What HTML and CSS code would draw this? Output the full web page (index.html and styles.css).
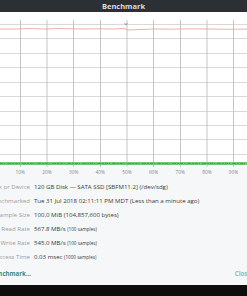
FILE: index.html
```html
<!DOCTYPE html>
<html lang="en">
<head>
  <meta charset="UTF-8" />
  <title>Benchmark</title>
  <link rel="stylesheet" href="styles.css">
</head>
<body>

  <div class="window">
    <header class="titlebar">Benchmark</header>

    <div class="chart">
      <svg class="plot" width="247" height="155" viewBox="0 0 247 155">
        <g class="grid-h">
          <line x1="0" y1="12.5" x2="247" y2="12.5"/>
          <line x1="0" y1="26.5" x2="247" y2="26.5"/>
          <line x1="0" y1="41.5" x2="247" y2="41.5"/>
          <line x1="0" y1="55.5" x2="247" y2="55.5"/>
          <line x1="0" y1="70.5" x2="247" y2="70.5"/>
          <line x1="0" y1="84.5" x2="247" y2="84.5"/>
          <line x1="0" y1="99.5" x2="247" y2="99.5"/>
          <line x1="0" y1="113.5" x2="247" y2="113.5"/>
          <line x1="0" y1="127.5" x2="247" y2="127.5"/>
          <line x1="0" y1="142.5" x2="247" y2="142.5"/>
        </g>
        <g class="grid-v">
          <line x1="20.5" y1="8" x2="20.5" y2="155"/>
          <line x1="47" y1="8" x2="47" y2="155"/>
          <line x1="73.5" y1="8" x2="73.5" y2="155"/>
          <line x1="100.5" y1="8" x2="100.5" y2="155"/>
          <line x1="127" y1="8" x2="127" y2="155"/>
          <line x1="153.5" y1="8" x2="153.5" y2="155"/>
          <line x1="180.5" y1="8" x2="180.5" y2="155"/>
          <line x1="207" y1="8" x2="207" y2="155"/>
          <line x1="233.5" y1="8" x2="233.5" y2="155"/>
        </g>
        <!-- read rate -->
        <polyline class="read" points="0,17 18,17 30,16.5 45,17 60,16.5 80,17 98,16.8 112,17 124,16.5 128,18 140,17.5 155,17 170,17.2 190,16.8 210,17 228,17.3 247,17"/>
        <!-- access time marker -->
        <polyline class="access" points="124.5,11 126,13 127.5,11"/>
        <!-- write rate -->
        <rect class="write" x="0" y="150" width="247" height="3"/>
        <line class="write-noise" x1="0" y1="151.5" x2="247" y2="151.5"/>
      </svg>
      <div class="axis">
        <span>10%</span><span>20%</span><span>30%</span><span>40%</span><span>50%</span>
        <span>60%</span><span>70%</span><span>80%</span><span>90%</span>
      </div>
    </div>

    <dl class="info">
      <div class="row"><dt>Disk or Device</dt><dd>120 GB Disk — SATA SSD [SBFM11.2] (/dev/sdg)</dd></div>
      <div class="row"><dt>Last Benchmarked</dt><dd>Tue 31 Jul 2018 02:11:11 PM MDT (Less than a minute ago)</dd></div>
      <div class="row"><dt>Sample Size</dt><dd>100.0 MiB (104,857,600 bytes)</dd></div>
      <div class="row"><dt>Average Read Rate</dt><dd>567.8 MB/s <small>(100 samples)</small></dd></div>
      <div class="row"><dt>Average Write Rate</dt><dd>545.0 MB/s <small>(100 samples)</small></dd></div>
      <div class="row"><dt>Average Access Time</dt><dd>0.03 msec <small>(1000 samples)</small></dd></div>
    </dl>

    <div class="actions">
      <button class="start">Start Benchmark…</button>
      <button class="close">Close</button>
    </div>
  </div>

</body>
</html>
```

FILE: styles.css
```css
* {
  box-sizing: border-box;
  margin: 0;
  padding: 0;
}

body {
  width: 247px;
  height: 296px;
  overflow: hidden;
  background: #0d0d0d;
  font-family: 'Open Sans', 'DejaVu Sans', sans-serif;
}

.window {
  height: 285px;
  background: #f5f7f8;
  display: flex;
  flex-direction: column;
}

.titlebar {
  height: 12px;
  background: #2c3035;
  color: #dcdcdc;
  font-size: 7.5px;
  font-weight: bold;
  line-height: 12px;
  text-align: center;
}

.chart {
  background: #f5f7f8;
}

.plot {
  display: block;
  background: #ffffff;
}

.grid-h line {
  stroke: #d9d9d9;
  stroke-width: 1;
}

.grid-v line {
  stroke: #c4c4c4;
  stroke-width: 1;
}

.read {
  fill: none;
  stroke: #e69a98;
  stroke-width: 0.8;
}

.access {
  fill: none;
  stroke: #6f8fb8;
  stroke-width: 0.8;
}

.write {
  fill: #74c874;
}

.write-noise {
  stroke: #4a9f4d;
  stroke-width: 1;
  stroke-dasharray: 3 1 1 2 4 1 2 1;
}

.axis {
  display: grid;
  grid-template-columns: repeat(9, 26.67px);
  padding-left: 7px;
  height: 10px;
  line-height: 10px;
  font-size: 4.8px;
  color: #8a8a8a;
  text-align: center;
}

.info {
  padding-top: 3px;
}

.row {
  display: grid;
  grid-template-columns: 30px 1fr;
  column-gap: 4px;
  height: 14px;
  line-height: 14px;
  font-size: 6.1px;
  white-space: nowrap;
}

.row dt {
  direction: rtl;
  text-align: right;
  overflow: hidden;
  color: #9c9c9c;
}

.row dd {
  color: #3a3a3a;
}

.row small {
  font-size: 4.6px;
}

.actions {
  margin-top: auto;
  height: 20px;
  display: flex;
  justify-content: space-between;
  align-items: center;
  margin-left: -26px;
  margin-right: -4px;
  padding-bottom: 3px;
}

.actions button {
  background: none;
  border: none;
  font-family: inherit;
  font-size: 6.1px;
  font-weight: bold;
}

.start {
  color: #2e8f7d;
}

.close {
  color: #86bdb8;
}
```
